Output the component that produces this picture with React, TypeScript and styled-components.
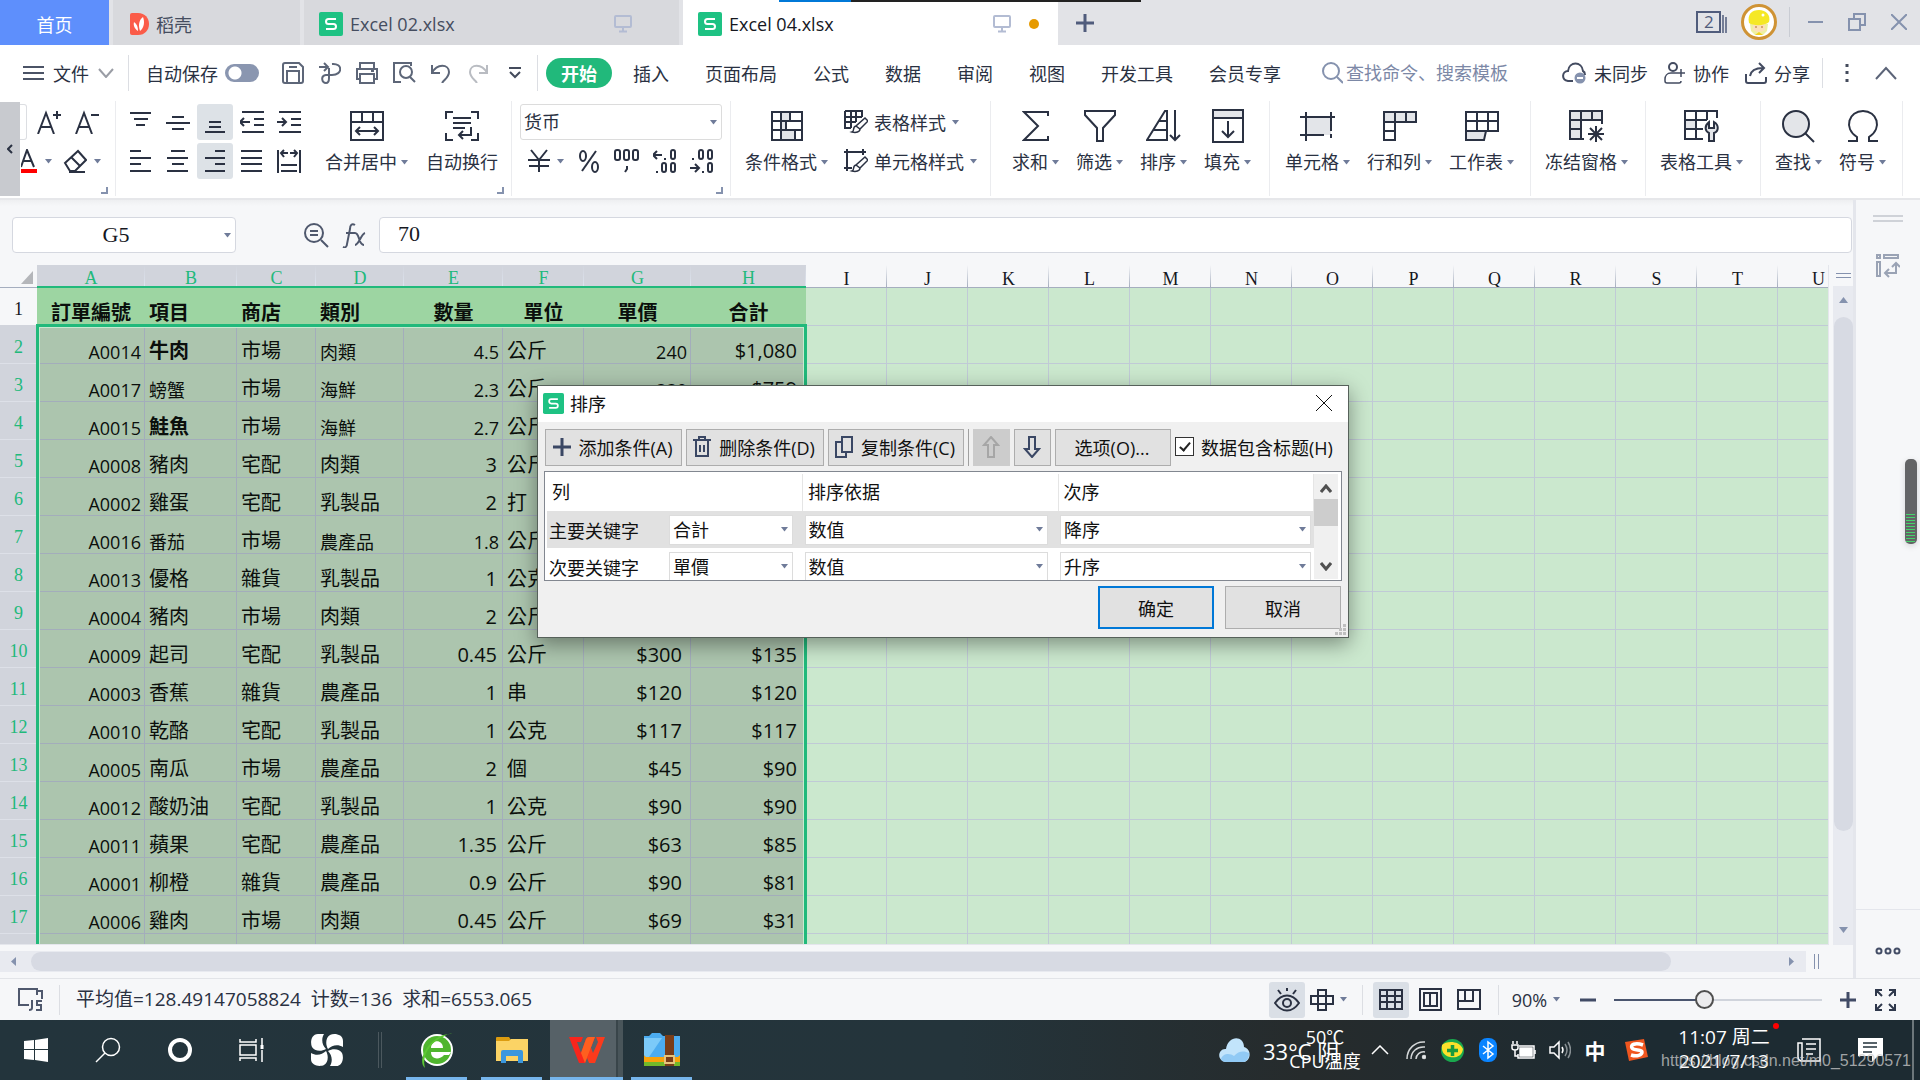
import React from "react";
import styled, { createGlobalStyle, css } from "styled-components";

const ui = `"Open Sans", "Noto Sans CJK SC", sans-serif`;
const sheetFont = `"Open Sans", "Noto Sans CJK TC", sans-serif`;
const serif = `"Liberation Serif", "Noto Sans CJK SC", serif`;
const ink = "#2a3142";
const green = "#21b97b";
const slate = "#8592ae";

const Global = createGlobalStyle`
  *, *::before, *::after { box-sizing: border-box; }
  body { margin: 0; font-family: ${ui}; font-size: 18px; color: ${ink}; }
  button, input, select { font: inherit; color: inherit; }
  button { background: none; border: 0; padding: 0; display: inline-flex; align-items: center; justify-content: center; white-space: nowrap; }
  svg { display: block; flex: none; }
`;

const Page = styled.div`
  display: flex;
  flex-direction: column;
  height: 100vh;
  overflow: hidden;
  position: relative;
  background: #f6f7f9;
`;

type IconProps = { w: number; h: number; c?: string; s?: number; children: React.ReactNode };
const Icon = ({ w, h, c = ink, s = 2, children }: IconProps) => (
  <svg width={w} height={h} viewBox={`0 0 ${w} ${h}`} fill="none" stroke={c} strokeWidth={s} aria-hidden="true">
    {children}
  </svg>
);
const Caret = ({ c = "#6f7b99" }: { c?: string }) => (
  <svg width="7" height="5" viewBox="0 0 7 5" aria-hidden="true"><path d="M0 0h7L3.5 4.5z" fill={c} /></svg>
);

/* ---------- document tabs ---------- */
const TabBar = styled.header`
  display: flex;
  flex: none;
  height: 45px;
  gap: 4px;
  background: #e2e3e7;
`;
const DocTab = styled.button<{ $w: number; $kind?: "home" | "active" }>`
  width: ${(p) => p.$w}px;
  height: 45px;
  padding: 2px 15px 0;
  gap: 7px;
  justify-content: ${(p) => (p.$kind === "home" ? "center" : "flex-start")};
  background: ${(p) => (p.$kind === "home" ? "#5e8ffc" : p.$kind === "active" ? "#fff" : "#d8d9dd")};
  color: ${(p) => (p.$kind === "home" ? "#fff" : p.$kind === "active" ? "#16181f" : "#454d5f")};
`;
const TabName = styled.span`flex: 1; text-align: left;`;
const Dot = styled.span<{ $on?: boolean }>`
  width: 10px;
  height: 10px;
  margin: 0 4px 0 11px;
  border-radius: 50%;
  background: ${(p) => (p.$on ? "#e69a00" : "transparent")};
`;
const NewTab = styled.button`width: 46px; height: 45px;`;
const WindowTools = styled.div`
  display: flex;
  align-items: center;
  margin-left: auto;
  height: 44px;
`;
const WinButton = styled.button<{ $w: number }>`width: ${(p) => p.$w}px; height: 44px;`;
const Rule = styled.span<{ $h: number; $m?: string; $c?: string }>`
  width: 1px;
  flex: none;
  height: ${(p) => p.$h}px;
  margin: ${(p) => p.$m || "0"};
  background: ${(p) => p.$c || "#dcdee3"};
`;
const TopStrip = styled.div`
  position: absolute;
  top: 0;
  left: 779px;
  width: 362px;
  height: 2px;
  background: linear-gradient(90deg, #0078d7 72px, #222 72px);
`;

const SheetLogo = ({ size }: { size: number }) => (
  <svg width={size} height={size} viewBox="0 0 24 24" aria-hidden="true">
    <rect width="24" height="24" rx="2" fill="#1ec283" />
    <path d="M17 7H9.5Q7 7 7 9.500T9.500 12h5Q17 12 17 14.500T14.500 17H7" fill="none" stroke="#fff" strokeWidth="2" />
  </svg>
);
const Monitor = () => (
  <Icon w={18} h={18} c="#b3bcd3"><rect x="1" y="1" width="16" height="11" rx="1" /><path d="M9 12v4M5 16.500h8" /></Icon>
);

const Tabs = () => (
  <TabBar>
    <DocTab $w={109} $kind="home">首页</DocTab>
    <DocTab $w={187}>
      <svg width="21" height="22" viewBox="-2 0 21 22" aria-hidden="true">
        <path d="M0 2Q0 0 2 0h6c7 0 11 5 11 11s-4 11-11 11H2q-2 0-2-2z" fill="#fb5c49" />
        <path d="M8 18C5 16 3 13 4 9c3 2 4 5 4 9M10 18C8 12 9 7 13 4c2 5 1 11-3 14" fill="#fff" />
      </svg>
      稻壳
    </DocTab>
    <DocTab $w={375}><SheetLogo size={24} /><TabName>Excel 02.xlsx</TabName><Monitor /><Dot /></DocTab>
    <DocTab $w={375} $kind="active"><SheetLogo size={24} /><TabName>Excel 04.xlsx</TabName><Monitor /><Dot $on /></DocTab>
    <NewTab aria-label="New tab"><Icon w={18} h={18} c="#505c7c" s={3}><path d="M9 0v18M0 9h18" /></Icon></NewTab>
    <WindowTools>
      <WinButton $w={44} aria-label="Windows">
        <svg width="31" height="22" viewBox="0 0 31 22" fill="none" stroke="#505c7c" strokeWidth="2" aria-hidden="true">
          <rect x="1" y="1" width="23" height="20" /><path d="M27 4v18M30 6v16" strokeWidth="1.500" />
          <text x="8" y="17" fontSize="17" fill="#505c7c" stroke="none">2</text>
        </svg>
      </WinButton>
      <WinButton $w={52} aria-label="Account">
        <svg width="36" height="36" viewBox="0 0 36 36" aria-hidden="true">
          <circle cx="18" cy="18" r="16.500" fill="#fff" stroke="#cf9335" strokeWidth="3" />
          <path d="M9 20h18l-1 7-4 4h-8l-4-4z" fill="#eef0a0" />
          <path d="M12 20h12v6q-6 4-12 0z" fill="#fbe0b8" />
          <path d="M8 19C6 10 11 6 18 6s12 5 10 12c-4 4-16 4-20 1" fill="#f5e826" />
          <circle cx="22" cy="11" r="1.500" fill="#fff" />
          <path d="M14 23h2M20 23h2" stroke="#b26b33" strokeWidth="1" />
          <path d="M14 31l4-3 4 3z" fill="#f2d21c" />
        </svg>
      </WinButton>
      <Rule $h={30} $m="0 4px" $c="#c9ccd3" />
      <WinButton $w={42} aria-label="Minimize"><Icon w={16} h={18} c={slate}><path d="M1 9h15" /></Icon></WinButton>
      <WinButton $w={42} aria-label="Restore"><Icon w={18} h={18} c={slate}><path d="M1 6h11v11H1zM6 6V1h11v11h-5" /></Icon></WinButton>
      <WinButton $w={42} aria-label="Close"><Icon w={16} h={16} c={slate}><path d="M0 0l16 16M16 0L0 16" /></Icon></WinButton>
    </WindowTools>
  </TabBar>
);

/* ---------- menu row ---------- */
const MenuRow = styled.nav`
  display: flex;
  flex: none;
  align-items: center;
  height: 56px;
  padding: 0 22px 0 23px;
  background: #fff;
`;
const FileButton = styled.button`gap: 9px; margin-right: 14px;`;
const AutoSave = styled.label`
  display: flex;
  flex: none;
  align-items: center;
  gap: 7px;
  margin: 0 22px 0 17px;
  white-space: nowrap;
`;
const Toggle = styled.input`
  appearance: none;
  width: 34px;
  height: 18px;
  margin: 0;
  border-radius: 9px;
  background: radial-gradient(circle at 10px 9px, #fff 6px, transparent 7px) #8a96b0;
`;
const QuickTools = styled.div`display: flex; flex: none; gap: 13px; margin-right: 10px;`;
const QuickButton = styled.button`flex: none; width: 24px; height: 24px;`;
const StartTab = styled.button`
  flex: none;
  height: 30px;
  padding: 0 15px;
  margin: 0 3px 0 8px;
  border-radius: 15px;
  background: ${green};
  color: #fff;
  font-weight: 700;
`;
const MenuTab = styled.button`flex: none; padding: 0 18px;`;
const Search = styled.label`
  display: flex;
  flex: 1;
  min-width: 0;
  align-items: center;
  gap: 3px;
  margin-left: 23px;
`;
const SearchInput = styled.input`
  flex: 1;
  width: 100%;
  min-width: 0;
  padding: 0;
  border: 0;
  outline: 0;
  background: none;
  &::placeholder { color: #7c88a6; opacity: 1; }
`;
const Share = styled.div`display: flex; flex: none; gap: 16px; align-items: center;`;
const ShareButton = styled.button`gap: 7px;`;

const g = "#5d6678";
const Menu = () => (
  <MenuRow>
    <FileButton>
      <Icon w={21} h={14} c="#4b5366"><path d="M0 1h21M0 7h21M0 13h21" /></Icon>文件
      <Icon w={16} h={10} c="#9a9da5"><path d="M1 1l7 8 7-8" /></Icon>
    </FileButton>
    <Rule $h={36} />
    <AutoSave>自动保存<Toggle type="checkbox" /></AutoSave>
    <QuickTools>
      <QuickButton aria-label="Save"><Icon w={22} h={22} c={g}><path d="M3 1h14l4 4v14q0 2-2 2H3q-2 0-2-2V3q0-2 2-2zM5 21V9h12v12M7 5h8" /></Icon></QuickButton>
      <QuickButton aria-label="Export"><Icon w={22} h={22} c={g}><path d="M0 5h8M5 1l4 4-4 4M13 2c11-1 11 11 0 11H7c-6 1-4 8 0 8 3 0 3-3 3-5V6" /></Icon></QuickButton>
      <QuickButton aria-label="Print"><Icon w={22} h={22} c={g}><path d="M4 6V1h14v5M4 17H1V7h20v10h-3M4 12h14v9H4zM15 9h3" /></Icon></QuickButton>
      <QuickButton aria-label="Preview"><Icon w={24} h={22} c={g}><path d="M9 20H2V1h17v3M18 15l5 5" /><circle cx="14" cy="10" r="6" /></Icon></QuickButton>
      <QuickButton aria-label="Undo"><Icon w={20} h={20} c={g}><path d="M1 2v8h8M1 10C6 0 18 1 18 9c0 5-4 7-7 11" /></Icon></QuickButton>
      <QuickButton aria-label="Redo"><Icon w={20} h={20} c="#b9bcc2"><path d="M19 2v8h-8M19 10C14 0 2 1 2 9c0 5 4 7 7 11" /></Icon></QuickButton>
      <QuickButton aria-label="More"><Icon w={12} h={12} c="#444b5c"><path d="M0 1h12M1 5l5 5 5-5" /></Icon></QuickButton>
    </QuickTools>
    <Rule $h={36} />
    <StartTab>开始</StartTab>
    {["插入", "页面布局", "公式", "数据", "审阅", "视图", "开发工具", "会员专享"].map((t) => <MenuTab key={t}>{t}</MenuTab>)}
    <Search>
      <Icon w={21} h={22} c={slate}><circle cx="9" cy="9" r="8" /><path d="M15 15l6 6" /></Icon>
      <SearchInput placeholder="查找命令、搜索模板" />
    </Search>
    <Share>
      <ShareButton>
        <Icon w={25} h={22} c="#434b60"><path d="M11 19H6c-7-1-6-10 0-10C7-1 20-1 21 9c2 1 2 2 2 4" /><circle cx="18" cy="16" r="5.500" fill={slate} stroke="none" /><path d="M15 16h6" stroke="#fff" /></Icon>
        未同步
      </ShareButton>
      <ShareButton>
        <Icon w={22} h={22} c="#434b60"><circle cx="9" cy="5" r="4" /><path d="M13 11H7c-4 0-6 3-6 6v2q0 2 2 2h12q2 0 2-2M17 7v8M13 11h8" strokeWidth="1.500" /></Icon>
        协作
      </ShareButton>
      <ShareButton>
        <Icon w={22} h={22} c="#434b60"><path d="M1 12v7q0 2 2 2h16q2 0 2-2v-4M5 14C6 8 11 6 18 6M14 1l5 5-5 5" /></Icon>
        分享
      </ShareButton>
    </Share>
    <Rule $h={30} $m="0 12px" />
    <QuickButton aria-label="Menu"><Icon w={4} h={20} c="#444b5c" s={3}><path d="M2 1v3M2 8v3M2 16v3" /></Icon></QuickButton>
    <Rule $h={1} $m="0 7px" $c="#fff" />
    <QuickButton aria-label="Collapse"><Icon w={22} h={14} c="#5c6478"><path d="M1 13L11 2l10 11" /></Icon></QuickButton>
  </MenuRow>
);

/* ---------- ribbon ---------- */
const Ribbon = styled.section`
  display: flex;
  flex: none;
  height: 99px;
  padding-bottom: 2px;
  background: #fff;
  border-bottom: 2px solid #e6e7ea;
`;
const ScrollStrip = styled.button`width: 20px; background: #c8cacf; margin-top: 1px;`;
const Group = styled.div<{ $pad: string; $gap?: number }>`
  position: relative;
  display: flex;
  gap: ${(p) => p.$gap ?? 17}px;
  padding: ${(p) => p.$pad};
  border-right: 1px solid #ebecef;
`;
const Launcher = styled.span`
  position: absolute;
  right: 7px;
  bottom: 2px;
  width: 7px;
  height: 7px;
  border: solid ${slate};
  border-width: 0 2px 2px 0;
`;
const Rows = styled.div`display: flex; flex-direction: column; gap: 3px; padding-top: 3px;`;
const Line = styled.div<{ $gap?: number }>`display: flex; align-items: center; height: 36px; gap: ${(p) => p.$gap ?? 1}px;`;
const Tool = styled.button<{ $on?: boolean; $w?: number }>`
  width: ${(p) => p.$w ?? 36}px;
  height: 36px;
  gap: 7px;
  border-radius: 3px;
  ${(p) => p.$on && css`background: #dde2e7;`}
`;
const Big = styled.button`
  flex-direction: column;
  justify-content: flex-start;
  gap: 6px;
  padding-top: 7px;
`;
const BigArt = styled.span`display: flex; height: 36px; align-items: center;`;
const BigLabel = styled.span`display: flex; align-items: center; gap: 4px; line-height: 24px;`;
const Wide = styled.button`height: 36px; gap: 6px; justify-content: flex-start;`;
const FieldEdge = styled.span`width: 7px; height: 36px; border: solid #dcdee2; border-width: 1px 1px 1px 0; border-radius: 0 3px 3px 0;`;

const Drop = styled.span<{ $h: number; $line: string }>`
  position: relative;
  display: flex;
  align-items: center;
  flex: 1;
  min-width: 0;
  height: ${(p) => p.$h}px;
  > svg { position: absolute; right: 5px; pointer-events: none; }
  select {
    appearance: none;
    width: 100%;
    height: 100%;
    padding: 0 16px 0 3px;
    border: 1px solid ${(p) => p.$line};
    border-radius: ${(p) => (p.$h > 32 ? 3 : 0)}px;
    background: #fff;
    outline: 0;
  }
`;
const FormatBox = styled.div`width: 202px; display: flex;`;
const Select = ({ value, label, h = 30, line = "#dcdcdc" }: { value: string; label: string; h?: number; line?: string }) => (
  <Drop $h={h} $line={line}>
    <select aria-label={label} defaultValue={value}><option>{value}</option></select>
    <Caret />
  </Drop>
);

const BigTool = ({ label, caret = true, children }: { label: string; caret?: boolean; children: React.ReactNode }) => (
  <Big><BigArt>{children}</BigArt><BigLabel>{label}{caret && <Caret />}</BigLabel></Big>
);
const LineTool = ({ d, on }: { d: string; on?: boolean }) => (
  <Tool $on={on} aria-label="Align"><Icon w={24} h={24}><path d={d} /></Icon></Tool>
);
const shade = "#e3e5e9";

const RibbonBar = () => (
  <Ribbon>
    <ScrollStrip aria-label="Scroll left"><Icon w={6} h={10}><path d="M5 1L1 5l4 4" /></Icon></ScrollStrip>
    <Group $pad="0 12px 0 0">
      <Rows>
        <Line>
          <FieldEdge />
          <Tool $w={42} aria-label="Grow font"><Icon w={24} h={24}><path d="M1 24L9 3l8 21M4 17h10M20 1v8M16 5h8" /></Icon></Tool>
          <Tool $w={32} aria-label="Shrink font"><Icon w={24} h={24}><path d="M1 24L9 3l8 21M4 17h10M16 5h8" /></Icon></Tool>
        </Line>
        <Line $gap={9}>
          <Tool $w={32} aria-label="Font color"><Icon w={17} h={24}><path d="M0 18L6 1l7 17M2 12h9" /><path d="M0 22h16" stroke="#f00" strokeWidth="4" /></Icon><Caret /></Tool>
          <Tool $w={42} aria-label="Clear"><Icon w={24} h={24}><path d="M2 14L15 2l8 9-11 11H7z" /><path d="M8 8l9 9M6 23h16" /></Icon><Caret /></Tool>
        </Line>
      </Rows>
      <Launcher />
    </Group>
    <Group $pad="0 13px 0 7px" $gap={18}>
      <Rows>
        <Line>
          <LineTool d="M1 3h21M5 9h14M7 15h9" />
          <LineTool d="M6 7h12M0 13h24M6 19h12" />
          <LineTool on d="M6 12h12M6 17h12M2 22h20" />
          <LineTool d="M2 2h22M14 9h10M14 15h10M2 22h22M0 12h10M4 8l-4 4 4 4" />
          <LineTool d="M2 2h22M14 9h10M14 15h10M2 22h22M0 12h8M5 8l4 4-4 4" />
        </Line>
        <Line>
          <LineTool d="M1 2h11M1 9h21M1 15h11M1 22h21" />
          <LineTool d="M5 2h14M1 9h21M6 15h12M1 22h21" />
          <LineTool on d="M12 2h10M2 9h20M12 15h10M2 22h20" />
          <LineTool d="M1 2h21M1 9h21M1 15h21M1 22h21" />
          <LineTool d="M1 1v23M23 1v23M4 16h16M4 22h16M4 4h7M13 4h7M7 1L4 4l3 4M17 1l3 3-3 4" />
        </Line>
      </Rows>
      <BigTool label="合并居中"><Icon w={34} h={30}><path d="M1 1h32v28H1zM1 11h32M12 1v10M23 1v10M6 20h22M10 16l-4 4 4 4M24 16l4 4-4 4" /></Icon></BigTool>
      <BigTool label="自动换行" caret={false}><Icon w={34} h={30}><path d="M8 1H1v7M26 1h7v7M8 29H1v-7M26 29h7v-7M8 7h18M8 12h18M8 17h12M26 16v8H14M18 20l-4 4 4 4" /></Icon></BigTool>
      <Launcher />
    </Group>
    <Group $pad="0 8px">
      <Rows>
        <FormatBox><Select label="Number format" value="货币" h={36} /></FormatBox>
        <Line>
          <Tool $w={52} aria-label="Currency"><Icon w={22} h={24}><path d="M3 1l8 10 8-10M0 11h22M1 17h20M11 11v12" /></Icon><Caret /></Tool>
          <Tool $w={32} aria-label="Percent"><Icon w={20} h={24}><path d="M17 2L3 22" /><ellipse cx="4" cy="7" rx="3" ry="5" /><ellipse cx="16" cy="18" rx="3" ry="5" /></Icon></Tool>
          <Tool $w={42} aria-label="Thousands"><Icon w={26} h={24}><rect x="1" y="1" width="5" height="10" rx="2" /><rect x="10" y="1" width="5" height="10" rx="2" /><rect x="19" y="1" width="5" height="10" rx="2" /><path d="M13 17v3l-2 3" /></Icon></Tool>
          <Tool $w={32} aria-label="Add decimal"><Icon w={24} h={24}><path d="M0 6h9M4 2L0 6l4 4M12 9v2M4 22v2" /><rect x="18" y="1" width="4" height="9" rx="2" /><rect x="9" y="14" width="4" height="9" rx="2" /><rect x="18" y="14" width="4" height="9" rx="2" /></Icon></Tool>
          <Tool $w={40} aria-label="Remove decimal"><Icon w={24} h={24}><path d="M0 19h9M5 15l4 4-4 4M13 22v2M3 9v2" /><rect x="9" y="1" width="4" height="9" rx="2" /><rect x="18" y="1" width="4" height="9" rx="2" /><rect x="18" y="14" width="4" height="9" rx="2" /></Icon></Tool>
        </Line>
      </Rows>
      <Launcher />
    </Group>
    <Group $pad="0 13px 0 14px" $gap={16}>
      <BigTool label="条件格式"><Icon w={32} h={30}><path d="M10 1h9v9h-9zM10 10h5v9h-5zM10 19h14v10H10z" fill={shade} /><path d="M1 1h30v28H1zM1 10h30M1 19h30M10 1v28M19 1v9M15 10v9M24 19v10" /></Icon></BigTool>
      <Rows>
        <Wide><Icon w={24} h={24}><path d="M1 1h17v6M1 1v17h6M1 7h17M7 1v17M12 1v11M1 12h11" /><path d="M21 8l3 3-8 8-4-3zM12 16c-4 1-1 5-4 6 4 1 8 0 8-3" fill="#fff" strokeWidth="1.500" /></Icon>表格样式<Caret /></Wide>
        <Wide><Icon w={24} h={24}><path d="M0 3h22M3 0v22M0 19h8M19 0v6" /><path d="M21 8l3 3-8 8-4-3zM12 16c-4 1-1 5-4 6 4 1 8 0 8-3" fill="#fff" strokeWidth="1.500" /></Icon>单元格样式<Caret /></Wide>
      </Rows>
    </Group>
    <Group $pad="0 18px 0 21px">
      <BigTool label="求和"><Icon w={28} h={32}><path d="M26 6V2H2l14 14L2 30h24v-4" /></Icon></BigTool>
      <BigTool label="筛选"><Icon w={34} h={34}><path d="M2 2h30v4L20 19v13h-6V19L2 6z" /></Icon></BigTool>
      <BigTool label="排序"><Icon w={36} h={34}><path d="M1 31L19 2h2v29zM13 12h8M7 21h14M29 1v30M24 26l5 5 5-5" /></Icon></BigTool>
      <BigTool label="填充"><Icon w={32} h={34}><path d="M1 1h30v8H1z" fill={shade} /><path d="M1 1h30v32H1zM1 9h30M16 12v15M10 22l6 6 6-6" /></Icon></BigTool>
    </Group>
    <Group $pad="0 16px 0 15px">
      <BigTool label="单元格"><Icon w={36} h={30}><path d="M6 6h25v18H6z" fill={shade} stroke="none" /><path d="M0 6h35M6 1v29M0 24h24M31 1v19M31 23v4" /></Icon></BigTool>
      <BigTool label="行和列"><Icon w={34} h={30}><path d="M1 1h32v10H1z" fill={shade} /><path d="M1 1v28h11V11M12 1v10M23 1v10M1 20h11" /></Icon></BigTool>
      <BigTool label="工作表"><Icon w={34} h={30}><path d="M1 20h20l-2 9H1z" fill={shade} /><path d="M1 1h32v19H1zM1 10h32M12 1v19M23 1v19" /></Icon></BigTool>
    </Group>
    <Group $pad="0 17px 0 14px">
      <BigTool label="冻结窗格"><Icon w={36} h={32}><path d="M1 1h32v9H12v19H1z" fill={shade} stroke="none" /><path d="M33 14V1H1v28h14M1 10h32M12 1v28M23 1v9M1 19h11" /><path d="M27 16v16M19 24h16M21 18l12 12M33 18L21 30" /></Icon></BigTool>
    </Group>
    <Group $pad="0 17px 0 14px">
      <BigTool label="表格工具"><Icon w={36} h={32}><path d="M1 10h11v9H1z" fill={shade} /><path d="M33 8V1H1v28h18M1 10h22M1 19h18M12 1v28M23 1v9" /><path d="M25 12c-5 4-4 9 0 11v8h5v-8c5-2 5-8 0-11v6h-5z" fill={shade} /></Icon></BigTool>
    </Group>
    <Group $pad="0 16px 0 14px">
      <BigTool label="查找"><Icon w={34} h={34}><circle cx="14" cy="15" r="13" fill={shade} /><path d="M23 24l9 9" /></Icon></BigTool>
      <BigTool label="符号"><Icon w={32} h={34}><path d="M1 32h9v-4C-4 19 2 2 16 2s20 17 6 26v4h9" /></Icon></BigTool>
    </Group>
  </Ribbon>
);

/* ---------- workspace ---------- */
const Workspace = styled.main`display: flex; flex: 1; min-height: 0;`;
const SheetPane = styled.div`display: flex; flex-direction: column; flex: 1; min-width: 0;`;
const SidePanel = styled.aside`
  display: flex;
  flex-direction: column;
  align-items: center;
  width: 67px;
  padding: 15px 0 23px;
  border-left: 3px solid #e4e6ec;
  gap: 32px;
`;
const SideFoot = styled.div`
  margin-top: auto;
  align-self: stretch;
  display: flex;
  justify-content: center;
  padding-top: 37px;
  border-top: 1px solid #e4e6ec;
`;
const FormulaBar = styled.div`
  display: flex;
  flex: none;
  align-items: center;
  height: 65px;
  padding: 5px 1px 0 12px;
  background: linear-gradient(#eeeff1, #f6f7f9 6px);
`;
const Field = styled.input<{ $w?: number; $center?: boolean }>`
  ${(p) => (p.$w ? `width: ${p.$w}px;` : "flex: 1; min-width: 0;")}
  height: 36px;
  padding: ${(p) => (p.$center ? "0 34px 0 18px" : "0 18px 2px")};
  border: 1px solid #d5d8e0;
  border-radius: 4px;
  background: #fff;
  outline: 0;
  font-family: ${serif};
  font-size: 22px;
  color: #16181f;
  text-align: ${(p) => (p.$center ? "center" : "left")};
`;
const NameBox = styled.div`
  position: relative;
  display: flex;
  align-items: center;
  margin-right: 68px;
  > svg { position: absolute; right: 5px; }
`;
const FxTools = styled.div`display: flex; gap: 13px; margin-right: 13px;`;
const SheetRow = styled.div`display: flex; flex: 1; min-height: 0;`;
const GridView = styled.div`
  position: relative;
  flex: 1;
  min-width: 0;
  overflow: hidden;
  background: #cbe8ce;
  border-bottom: 1px solid #e4e6ec;
`;
const Grid = styled.table`
  table-layout: fixed;
  width: 1859px;
  border-collapse: separate;
  border-spacing: 0;
  font-family: ${sheetFont};
  color: #0b0f0c;
  th, td { padding: 0; overflow: hidden; white-space: nowrap; }
`;
const ColHead = styled.th<{ $sel?: boolean }>`
  height: 23px;
  font: 400 18px/16px ${serif};
  vertical-align: bottom;
  color: ${(p) => (p.$sel ? green : "#16181f")};
  background: ${(p) => (p.$sel ? "linear-gradient(#d1d4dc, #dde3ee) right / 1px 100% no-repeat #d1d4dc" : "linear-gradient(#f6f7f9, #a5aebf) right / 1px 100% no-repeat #f6f7f9")};
  border-bottom: ${(p) => (p.$sel ? `2px solid ${green}` : "1px solid #a5aebf")};
`;
const Corner = styled.th`
  background: #f6f7f9;
  border-bottom: 1px solid #a5aebf;
  svg { margin: 2px 0 0 21px; }
`;
const RowHead = styled.th<{ $sel?: boolean }>`
  height: 38px;
  font: 400 18px/26px ${serif};
  vertical-align: bottom;
  color: ${(p) => (p.$sel ? green : "#16181f")};
  background: ${(p) => (p.$sel ? "#d1d4dc" : "#f6f7f9")};
  border-bottom: 1px solid ${(p) => (p.$sel ? "#dde0e8" : "#d1d4dc")};
  && { padding-bottom: 3px; }
`;
type Look = "head" | "sel" | "blank";
const Cell = styled.td<{ $look: Look; $right?: number; $small?: boolean; $bold?: boolean }>`
  height: 38px;
  vertical-align: bottom;
  border: solid ${(p) => (p.$look === "sel" ? "#a3adbb" : p.$look === "head" ? "#9dd5a2" : "#c0cad6")};
  border-width: 0 1px 1px 0;
  background: ${(p) => (p.$look === "sel" ? "#acc5ae" : p.$look === "head" ? "#9dd5a2" : "#cbe8ce")};
  font-size: ${(p) => (p.$small ? 18 : 20)}px;
  line-height: ${(p) => (p.$small ? 22 : 24)}px;
  font-weight: ${(p) => (p.$bold ? 700 : 400)};
  text-align: ${(p) => (p.$right ? "right" : "left")};
  && { padding: 0 ${(p) => p.$right ?? 0}px 0 4px; }
`;
const HeadCell = styled(Cell)<{ $center?: boolean }>`
  text-align: ${(p) => (p.$center ? "center" : "left")};
  && { padding-right: ${(p) => (p.$center ? 3 : 0)}px; }
`;
const Selection = styled.div`
  position: absolute;
  top: 59px;
  bottom: -4px;
  left: 36px;
  width: 771px;
  border: 3px solid ${green};
  box-shadow: inset 0 0 0 1px #c9e9d0;
`;

const widths = [37, 108, 92, 79, 88, 99, 81, 107, 115, ...Array(13).fill(81)];
const letters = "ABCDEFGHIJKLMNOPQRSTU".split("");
const heads = ["訂單編號", "項目", "商店", "類別", "數量", "單位", "單價", "合計"];
// "~" marks the smaller face, "*" the bold one
const data: string[][] = [
  ["~A0014", "*牛肉", "市場", "~肉類", "~4.5", "公斤", "~240", "$1,080"],
  ["~A0017", "~螃蟹", "市場", "~海鮮", "~2.3", "公斤", "~330", "$759"],
  ["~A0015", "*鮭魚", "市場", "~海鮮", "~2.7", "公斤", "", ""],
  ["~A0008", "豬肉", "宅配", "肉類", "3", "公斤", "", ""],
  ["~A0002", "雞蛋", "宅配", "乳製品", "2", "打", "", ""],
  ["~A0016", "~番茄", "市場", "~農產品", "~1.8", "公斤", "", ""],
  ["~A0013", "優格", "雜貨", "乳製品", "1", "公克", "", ""],
  ["~A0004", "豬肉", "市場", "肉類", "2", "公斤", "", ""],
  ["~A0009", "起司", "宅配", "乳製品", "0.45", "公斤", "$300", "$135"],
  ["~A0003", "香蕉", "雜貨", "農產品", "1", "串", "$120", "$120"],
  ["~A0010", "乾酪", "宅配", "乳製品", "1", "公克", "$117", "$117"],
  ["~A0005", "南瓜", "市場", "農產品", "2", "個", "$45", "$90"],
  ["~A0012", "酸奶油", "宅配", "乳製品", "1", "公克", "$90", "$90"],
  ["~A0011", "蘋果", "宅配", "農產品", "1.35", "公斤", "$63", "$85"],
  ["~A0001", "柳橙", "雜貨", "農產品", "0.9", "公斤", "$90", "$81"],
  ["~A0006", "雞肉", "市場", "肉類", "0.45", "公斤", "$69", "$31"],
  ["", "", "", "", "", "", "", ""],
];
const rightPad: Record<number, [number, number]> = { 0: [3, 3], 4: [5, 3], 6: [8, 3], 7: [8, 8] };
const blanks = letters.slice(8);

const Sheet = () => (
  <GridView>
    <Grid>
      <colgroup>{widths.map((w, i) => <col key={i} style={{ width: w }} />)}</colgroup>
      <thead>
        <tr>
          <Corner aria-label="Select all"><svg width="12" height="13" viewBox="0 0 12 13"><path d="M12 0v13H0z" fill="#b4b6ba" /></svg></Corner>
          {letters.map((l, i) => <ColHead key={l} $sel={i < 8}>{l}</ColHead>)}
        </tr>
      </thead>
      <tbody>
        <tr>
          <RowHead>1</RowHead>
          {heads.map((h, i) => <HeadCell key={h} $look="head" $bold $center={i === 0 || i > 3}>{h}</HeadCell>)}
          {blanks.map((b) => <Cell key={b} $look="blank" />)}
        </tr>
        {data.map((row, r) => (
          <tr key={r}>
            <RowHead $sel>{r < 16 ? r + 2 : ""}</RowHead>
            {row.map((v, i) => {
              const small = v.startsWith("~");
              const pads = rightPad[i];
              return (
                <Cell key={i} $look="sel" $small={small} $bold={v.startsWith("*")} $right={pads && pads[small ? 1 : 0]}>
                  {v.replace(/^[~*]/, "")}
                </Cell>
              );
            })}
            {blanks.map((b) => <Cell key={b} $look="blank" />)}
          </tr>
        ))}
      </tbody>
    </Grid>
    <Selection />
  </GridView>
);

const VScroll = styled.div`
  display: flex;
  flex-direction: column;
  align-items: center;
  width: 25px;
  flex: none;
  padding-left: 4px;
  border-left: 1px solid #e4e6ec;
`;
const Splitter = styled.span`
  width: 15px;
  height: 5px;
  margin: 8px 0;
  border: solid ${slate};
  border-width: 1px 0;
  flex: none;
`;
const VTrack = styled.div`
  display: flex;
  flex-direction: column;
  align-items: center;
  justify-content: space-between;
  flex: 1;
  width: 100%;
  padding: 11px 0 12px;
  background: #e8eaf0;
`;
const VThumb = styled.div`width: 19px; height: 514px; margin: 14px 0 auto; border-radius: 10px; background: #d7dae3;`;
const HScroll = styled.div`display: flex; flex: none; height: 33px; padding: 6px 34px 6px 0; gap: 8px;`;
const HTrack = styled.div`display: flex; align-items: center; flex: 1; padding: 1px 12px 1px 11px; background: #e8eaf0;`;
const HThumb = styled.div`width: 92%; height: 19px; margin: 0 auto 0 15px; border-radius: 10px; background: #d7dae3;`;
const HSplit = styled.span`width: 5px; height: 15px; margin-top: 3px; border: solid ${slate}; border-width: 0 1px;`;
const Tri = ({ d, w, h }: { d: string; w: number; h: number }) => (
  <svg width={w} height={h} viewBox={`0 0 ${w} ${h}`} aria-hidden="true"><path d={d} fill={slate} /></svg>
);

/* ---------- status bar ---------- */
const StatusBar = styled.footer`
  display: flex;
  flex: none;
  align-items: center;
  height: 42px;
  padding: 0 24px 0 18px;
  border-top: 1px solid #e2e4e8;
`;
const Stats = styled.output`font-size: 19px; white-space: pre; margin-right: auto; padding-bottom: 3px;`;
const ViewButton = styled.button<{ $on?: boolean; $w?: number }>`
  width: ${(p) => p.$w ?? 36}px;
  height: 36px;
  gap: 6px;
  border-radius: 3px;
  ${(p) => p.$on && css`background: #dadfe6;`}
`;
const Zoom = styled.input`
  appearance: none;
  width: 208px;
  height: 20px;
  margin: 0 18px;
  background: linear-gradient(90deg, #4a556f 43%, #d0d4dc 43%) center / 100% 2px no-repeat;
  &::-webkit-slider-thumb {
    appearance: none;
    width: 19px;
    height: 19px;
    border: 2px solid #4f4f4f;
    border-radius: 50%;
    background: #ececee;
  }
`;

const Status = () => (
  <StatusBar>
    <Icon w={25} h={23} c="#4f586d"><path d="M11 17H1V1h18v6M19 3h5v8" /><path d="M14 12v8q0 2-3 2M24 13h-5v4h4v5h-5" /></Icon>
    <Rule $h={30} $m="0 16px" />
    <Stats>平均值=128.49147058824&nbsp; 计数=136&nbsp; 求和=6553.065</Stats>
    <ViewButton $on aria-label="Eye care"><Icon w={26} h={24}><path d="M1 15c7-10 17-10 24 0-7 10-17 10-24 0zM13 0v3M4 2l3 4M22 2l-3 4" /><circle cx="13" cy="15" r="4" /></Icon></ViewButton>
    <ViewButton $w={46} aria-label="Reading"><Icon w={24} h={22}><path d="M8 1h8v20H8zM1 7h22v8H1z" /></Icon><Caret /></ViewButton>
    <Rule $h={30} $m="0 10px 0 11px" />
    <ViewButton $on aria-label="Normal view"><Icon w={24} h={21}><path d="M1 1h22v19H1zM1 7h22M1 13h22M8 1v19M16 1v19" /></Icon></ViewButton>
    <ViewButton $w={42} aria-label="Page layout"><Icon w={23} h={23}><path d="M1 1h21v21H1zM5 5h13v13H5zM11 5v13" /></Icon></ViewButton>
    <ViewButton $w={36} aria-label="Page breaks"><Icon w={24} h={21}><path d="M1 1h22v19H1zM1 12h15V1M8 1v11" /></Icon></ViewButton>
    <Rule $h={30} $m="0 10px 0 11px" />
    <ViewButton $w={54}>90%<Caret /></ViewButton>
    <Rule $h={1} $m="0 8px" $c="#f6f7f9" />
    <Icon w={16} h={16} c="#414b66" s={3}><path d="M0 8h16" /></Icon>
    <Zoom type="range" aria-label="Zoom" min={0} max={100} defaultValue={43} />
    <Icon w={16} h={16} c="#414b66" s={3}><path d="M0 8h16M8 0v16" /></Icon>
    <Rule $h={1} $m="0 9px" $c="#f6f7f9" />
    <Icon w={21} h={22} c="#2f384c"><path d="M1 7V1h6M1 1l6 6M14 1h6v6M20 1l-6 6M1 15v6h6M1 21l6-6M14 21h6v-6M20 21l-6-6" /></Icon>
  </StatusBar>
);

/* ---------- sort dialog ---------- */
const Dialog = styled.section`
  position: absolute;
  top: 385px;
  left: 537px;
  width: 812px;
  height: 253px;
  display: flex;
  flex-direction: column;
  border: 1px solid #56615a;
  background: #f0f0f0;
  color: #111;
  box-shadow: 0 6px 20px rgba(0, 0, 0, 0.4);
`;
const DialogTitle = styled.header`
  display: flex;
  align-items: center;
  height: 36px;
  padding: 0 16px 2px 5px;
  gap: 6px;
  background: #fff;
  button { margin-left: auto; }
`;
const DialogBar = styled.div`display: flex; align-items: center; padding: 7px 6px 4px 7px; gap: 4px;`;
const FlatButton = styled.button<{ $w: number; $off?: boolean }>`
  width: ${(p) => p.$w}px;
  height: 37px;
  padding: 0 2px 2px 0;
  gap: 8px;
  border: 1px solid ${(p) => (p.$off ? "#ccc" : "#adadad")};
  background: ${(p) => (p.$off ? "#ccc" : "#e1e1e1")};
`;
const HasHeader = styled.label`display: flex; align-items: center; gap: 7px; padding-bottom: 2px; white-space: nowrap;`;
const Check = styled.input`
  appearance: none;
  width: 19px;
  height: 19px;
  margin: 0;
  border: 1px solid #333;
  background: #fff;
  display: grid;
  place-items: center;
  &:checked::after {
    content: "";
    width: 6px;
    height: 11px;
    margin-bottom: 3px;
    border: solid #222;
    border-width: 0 2px 2px 0;
    transform: rotate(40deg);
  }
`;
const KeyBox = styled.div`
  display: flex;
  height: 110px;
  margin: 1px 6px 0;
  padding: 2px 3px 1px 2px;
  overflow: hidden;
  border: 1px solid #828790;
  background: #fff;
`;
const Keys = styled.table`
  width: calc(100% - 24px);
  table-layout: fixed;
  border-collapse: collapse;
  th, td { height: 37px; padding: 0; text-align: left; font-weight: 400; }
  th { padding: 0 0 3px 5px; border-right: 1px solid #e5e5e5; }
`;
const KeyRow = styled.tr<{ $on?: boolean }>`background: ${(p) => (p.$on ? "#e1e1e1" : "#fff")};`;
const KeyCell = styled.div<{ $last?: boolean }>`
  display: flex;
  align-items: center;
  padding: 0 ${(p) => (p.$last ? 3 : 10)}px 0 2px;
  gap: 30px;
  white-space: nowrap;
`;
const KeyScroll = styled.div`
  display: flex;
  flex-direction: column;
  align-items: center;
  width: 24px;
  height: 105px;
  padding: 10px 0 8px;
  background: #f0f0f0;
`;
const KeyThumb = styled.div`width: 24px; height: 27px; margin: 6px 0 auto; background: #cdcdcd;`;
const DialogFoot = styled.footer`display: flex; justify-content: flex-end; gap: 11px; padding: 5px 7px;`;
const Action = styled.button<{ $main?: boolean }>`
  width: 116px;
  height: 43px;
  border: ${(p) => (p.$main ? "2px solid #0078d7" : "1px solid #adadad")};
  background: #e1e1e1;
`;
const Grip = styled.svg`position: absolute; right: 2px; bottom: 2px;`;

const navy = "#3a4764";
const SortDialog = () => (
  <Dialog role="dialog" aria-label="排序">
    <DialogTitle>
      <SheetLogo size={21} />排序
      <button aria-label="Close dialog"><Icon w={16} h={16} c="#111" s={1}><path d="M0 0l16 16M16 0L0 16" /></Icon></button>
    </DialogTitle>
    <DialogBar>
      <FlatButton $w={137}><Icon w={18} h={18} c={navy} s={3}><path d="M9 0v18M0 9h18" /></Icon>添加条件(A)</FlatButton>
      <FlatButton $w={138}><Icon w={18} h={22} c={navy}><path d="M0 4h18M6 4V1h6v3M3 4v16h12V4M7 9v7M11 9v7" /></Icon>删除条件(D)</FlatButton>
      <FlatButton $w={136}><Icon w={18} h={22} c={navy}><path d="M7 1h10v15H7zM7 6H1v15h10v-5" /></Icon>复制条件(C)</FlatButton>
      <Rule $h={37} $c="#a0a0a0" />
      <FlatButton $w={37} $off disabled aria-label="Move up"><Icon w={18} h={22} c="#a6a6a6"><path d="M9 1l7 8h-4v12H6V9H2z" /></Icon></FlatButton>
      <FlatButton $w={37} aria-label="Move down"><Icon w={18} h={22} c={navy}><path d="M9 21l7-8h-4V1H6v12H2z" /></Icon></FlatButton>
      <FlatButton $w={116}>选项(O)...</FlatButton>
      <HasHeader><Check type="checkbox" defaultChecked />数据包含标题(H)</HasHeader>
    </DialogBar>
    <KeyBox>
      <Keys>
        <thead><tr><th>列</th><th>排序依据</th><th>次序</th></tr></thead>
        <tbody>
          <KeyRow $on>
            <td><KeyCell>主要关键字<Select label="主要关键字" value="合計" /></KeyCell></td>
            <td><KeyCell><Select label="排序依据" value="数值" /></KeyCell></td>
            <td><KeyCell $last><Select label="次序" value="降序" /></KeyCell></td>
          </KeyRow>
          <KeyRow>
            <td><KeyCell>次要关键字<Select label="次要关键字" value="單價" /></KeyCell></td>
            <td><KeyCell><Select label="排序依据" value="数值" /></KeyCell></td>
            <td><KeyCell $last><Select label="次序" value="升序" /></KeyCell></td>
          </KeyRow>
        </tbody>
      </Keys>
      <KeyScroll>
        <Icon w={12} h={9} c="#505050" s={3}><path d="M1 8l5-6 5 6" /></Icon>
        <KeyThumb />
        <Icon w={12} h={9} c="#505050" s={3}><path d="M1 1l5 6 5-6" /></Icon>
      </KeyScroll>
    </KeyBox>
    <DialogFoot><Action $main>确定</Action><Action>取消</Action></DialogFoot>
    <Grip width="11" height="11" viewBox="0 0 11 11"><path d="M8 0h3v3H8zM8 4h3v3H8zM8 8h3v3H8zM4 4h3v3H4zM4 8h3v3H4zM0 8h3v3H0z" fill="#bfbfbf" /></Grip>
  </Dialog>
);

/* ---------- desktop task bar ---------- */
const TaskBar = styled.footer`
  position: relative;
  display: flex;
  flex: none;
  align-items: center;
  height: 60px;
  background: linear-gradient(90deg, #23343c, #24343b 50%, #262b2c 68%, #1d2b32 85%);
  color: #fff;
`;
const Task = styled.button<{ $w: number }>`width: ${(p) => p.$w}px; height: 60px;`;
const InputMode = styled(Task)`font-size: 21px; font-weight: 700;`;
const Divider = styled.span`width: 4px; height: 36px; margin: 0 18px 0 12px; border: solid #4b585e; border-width: 0 1px;`;
const Running = styled.div`display: flex; gap: 2px;`;
const RunningApp = styled.button<{ $on?: boolean }>`
  width: 73px;
  height: 60px;
  background: ${(p) => (p.$on ? "linear-gradient(90deg, #566167 66px, #39454a 66px, #39454a 68px, #49555a 68px)" : "none")};
  box-shadow: ${(p) => (p.$on ? "inset 0 -3px #76b5ec" : "none")};
  &::after {
    content: "";
    position: absolute;
    bottom: 0;
    width: 61px;
    height: 3px;
    background: #76b5ec;
  }
`;
const Tray = styled.div`display: flex; align-items: center; margin-left: auto;`;
const Weather = styled.div`
  position: relative;
  display: flex;
  align-items: center;
  gap: 13px;
  width: 143px;
  font-size: 22px;
  white-space: nowrap;
`;
const CpuTemp = styled.div`
  position: absolute;
  left: 70px;
  width: 72px;
  padding-bottom: 3px;
  font-size: 18px;
  line-height: 24px;
  text-align: center;
`;
const Clock = styled.time`width: 124px; font-size: 19px; line-height: 24px; text-align: center; padding-bottom: 3px;`;
const Peek = styled.span`width: 8px; height: 60px; border-left: 2px solid #6d777b; margin-left: 4px;`;
const Watermark = styled.span`
  position: absolute;
  right: 9px;
  bottom: 9px;
  font: 16px/20px "Liberation Sans", sans-serif;
  color: rgba(205, 205, 205, 0.75);
`;
const Alert = styled.span`position: absolute; top: 3px; right: 141px; width: 6px; height: 6px; border-radius: 50%; background: #f00;`;

const Taskbar = () => (
  <TaskBar>
    <Task $w={72} aria-label="Start"><svg width="24" height="24" viewBox="0 0 24 24" fill="#fff"><path d="M0 3l10-1v9H0zM11 2l13-2v11H11zM0 12h10v10L0 21zM11 12h13v12l-13-2z" /></svg></Task>
    <Task $w={72} aria-label="Search"><Icon w={26} h={26} c="#fff" s={1.5}><circle cx="16" cy="10" r="8.500" /><path d="M10 16L1 25" /></Icon></Task>
    <Task $w={72} aria-label="Cortana"><Icon w={26} h={26} c="#fff" s={4}><circle cx="13" cy="13" r="10" /></Icon></Task>
    <Task $w={72} aria-label="Task view"><Icon w={26} h={24} c="#fff" s={1.5}><path d="M1 1v3h16V1M1 7h16v10H1zM1 23v-3h16v3M23 0v7M23 12v12" /><path d="M23 7v4" strokeWidth="3" /></Icon></Task>
    <Task $w={78} aria-label="Browser">
      <svg width="32" height="32" viewBox="0 0 32 32" fill="#fff" aria-hidden="true">
        {[0, 90, 180, 270].map((a) => <path key={a} transform={`rotate(${a} 16 16)`} d="M15 15C10 18 3 17 1 13-1 9 0 0 7 0h6C10 5 11 11 15 15z" />)}
      </svg>
    </Task>
    <Divider />
    <Running>
      <RunningApp aria-label="360 Browser">
        <svg width="34" height="36" viewBox="0 0 34 36" aria-hidden="true">
          <circle cx="17" cy="18" r="16" fill="#fff" /><circle cx="17" cy="18" r="14" fill="#4fb52e" />
          <path d="M11 16h12c0-9-12-9-12 0M31 20H11c0 8 9 8 13 3h5" fill="#fff" />
          <path d="M5 36C-5 27 13 0 32 2c-3-1-6 1-9 3C12 9 1 23 5 36" fill="#5cc832" />
        </svg>
      </RunningApp>
      <RunningApp aria-label="Explorer">
        <svg width="32" height="28" viewBox="0 0 32 28" aria-hidden="true">
          <path d="M0 2q0-1 1-1h12l2 3v6H0z" fill="#dc9c10" /><path d="M0 5h13l2-2h17v22H0z" fill="#fbd365" />
          <path d="M5 16q0-2 2-2h18q2 0 2 2v11h-5v-7H10v7H5z" fill="#3b97dd" />
        </svg>
      </RunningApp>
      <RunningApp $on aria-label="WPS">
        <svg width="36" height="28" viewBox="0 0 36 28" aria-hidden="true">
          <path d="M36 1h-9l2 5-5 11-3-8-4 10 3 8h6z" fill="#fb3a1c" />
          <path d="M0 1h14l-2 5H8l4 11 5-14q1-2 3-2h6L16 27h-6z" fill="#f9251c" />
          <path d="M12 17l5-14q1-2 3-2h6L16 27z" fill="#ff5f1f" />
        </svg>
      </RunningApp>
      <RunningApp aria-label="Archive">
        <svg width="36" height="34" viewBox="0 0 36 34" aria-hidden="true">
          <path d="M0 20h36v13H0z" fill="#72b92a" /><path d="M0 18h36v11H0z" fill="#f8a20c" />
          <path d="M0 3h5l3-3h8l3 3h17v19l-2 2H2l-2-2z" fill="#4cacf0" /><path d="M0 5h18L5 24H2l-2-2z" fill="#7ccaf9" />
          <path d="M21 2h9v31h-9z" fill="#7a3d18" /><path d="M21 23h9v7h-9z" fill="none" stroke="#e6c37b" strokeWidth="2" />
        </svg>
      </RunningApp>
    </Running>
    <Tray>
      <Weather>
        <svg width="31" height="25" viewBox="0 0 31 25" aria-hidden="true"><path d="M7 24C-3 23-1 10 7 11 9-3 25-3 25 9c8 2 7 14 0 15z" fill="#c2e4fb" /><path d="M2 21c3-7 10-5 13-3 5-6 11-5 15-3 0 5-2 8-5 9H7q-4 0-5-3" fill="#91caf5" /></svg>
        33°C 阴
        <CpuTemp>50℃<br />CPU温度</CpuTemp>
      </Weather>
      <Task $w={36} aria-label="Hidden icons"><Icon w={18} h={10} c="#fff" s={1.5}><path d="M1 9l8-8 8 8" /></Icon></Task>
      <Task $w={36} aria-label="Wi-Fi"><Icon w={20} h={20} c="#d5d8d9" s={1.5}><path d="M1 19C1 9 9 1 19 2M5 19C5 12 11 6 19 7M10 19c0-4 4-8 9-7" /><circle cx="18" cy="17" r="1.500" fill="#fff" /></Icon></Task>
      <Task $w={36} aria-label="Guard"><svg width="23" height="23" viewBox="0 0 23 23"><circle cx="11.500" cy="11.500" r="11.500" fill="#1aa84e" /><path d="M1 6c4-4 17-5 21 4-1 8-8 9-13 8C3 17 0 12 1 6" fill="#fce12b" /><path d="M11.500 6v11M6 11.500h11" stroke="#1a9b3e" strokeWidth="3.500" /></svg></Task>
      <Task $w={36} aria-label="Bluetooth"><svg width="18" height="24" viewBox="0 0 18 24"><rect width="18" height="24" rx="8" fill="#0a84ff" /><path d="M4 8l10 8-5 4V4l5 4-10 8" fill="none" stroke="#fff" strokeWidth="1.500" /></svg></Task>
      <Task $w={36} aria-label="Battery"><Icon w={26} h={18} c="#fff" s={1.5}><path d="M8 5h15v12H7v-4" /><path d="M9 7h12v8H9z" fill="#fff" /><path d="M24 9v4M2 0v3M6 0v3M1 4h6v3q0 2-3 2t-3-2zM4 9v6h3" /></Icon></Task>
      <Task $w={36} aria-label="Volume"><Icon w={22} h={20} c="#fff" s={1.5}><path d="M1 7h4l5-5v16l-5-5H1z" /><path d="M13 7q2 3 0 6" /><path d="M16 4q4 6 0 12M19 2q5 8 0 16" stroke="#889094" /></Icon></Task>
      <InputMode $w={34}>中</InputMode>
      <Task $w={50} aria-label="Sogou"><svg width="24" height="24" viewBox="0 0 24 24"><path d="M0 4L19 1l4 18-19 4z" fill="#f0561f" /><path d="M18 7C10 4 5 7 7 10s10 1 10 4-5 5-11 3" fill="none" stroke="#fff" strokeWidth="3.500" /></svg></Task>
      <Clock>11:07 周二<br />2021/7/13</Clock>
      <Task $w={46} aria-label="News"><Icon w={24} h={24} c="#fff" s={1.5}><path d="M5 1h18v22H4q-3-1-3-4V5h4v17M9 6h10M9 11h10M9 16h7" /></Icon></Task>
      <Task $w={76} aria-label="Notifications"><svg width="25" height="24" viewBox="0 0 25 24"><path d="M0 0h25v18h-5l-6 6v-6H0z" fill="#fff" /><path d="M5 5h14M5 9h14M5 14h9" stroke="#22313a" strokeWidth="1.500" /></svg></Task>
      <Peek />
    </Tray>
    <Alert />
    <Watermark>https://blog.csdn.net/m0_51290571</Watermark>
  </TaskBar>
);

const LoadMeter = styled.div`
  position: absolute;
  top: 459px;
  right: 3px;
  width: 12px;
  height: 85px;
  border-radius: 5px;
  box-shadow: 0 2px 6px rgba(0, 0, 0, 0.15);
  background: repeating-linear-gradient(0deg, #45d36b 0 1px, transparent 1px 3px) 1px 54px / 9px 29px no-repeat #636466;
`;

export default function App() {
  return (
    <Page>
      <Global />
      <Tabs />
      <Menu />
      <RibbonBar />
      <Workspace>
        <SheetPane>
          <FormulaBar>
            <NameBox><Field $w={224} $center aria-label="Cell" defaultValue="G5" /><Caret /></NameBox>
            <FxTools>
              <Icon w={25} h={25} c="#4f586d"><circle cx="10" cy="10" r="9" /><path d="M17 17l7 7M6 8h8M6 12h8" /></Icon>
              <Icon w={24} h={25} c="#4f586d"><path d="M13 2c-3-2-5 0-5 4L5 21c0 3-2 4-4 3M4 10h9M13 10c5 0 3 12 9 12M23 10c-4 1-6 12-10 12" /></Icon>
            </FxTools>
            <Field aria-label="Formula" defaultValue="70" />
          </FormulaBar>
          <SheetRow>
            <Sheet />
            <VScroll>
              <Splitter />
              <VTrack><Tri w={9} h={6} d="M0 6l4.500-6L9 6z" /><VThumb /><Tri w={9} h={6} d="M0 0h9L4.500 6z" /></VTrack>
            </VScroll>
          </SheetRow>
          <HScroll>
            <HTrack><Tri w={5} h={9} d="M5 0v9L0 4.500z" /><HThumb /><Tri w={5} h={9} d="M0 0v9l5-4.500z" /></HTrack>
            <HSplit />
          </HScroll>
        </SheetPane>
        <SidePanel>
          <Icon w={30} h={7} c="#cfd2d8"><path d="M0 1h30M0 6h30" /></Icon>
          <Icon w={24} h={24} c="#9aa3b5"><path d="M1 1h3v3H1zM8 1h14v3H8zM1 8h3v14H1zM20 9v10H10M16 13l4-4 4 4M13 15l-4 4 4 4" /></Icon>
          <SideFoot><Icon w={26} h={8} c="#434d66"><circle cx="4" cy="4" r="2.500" /><circle cx="13" cy="4" r="2.500" /><circle cx="22" cy="4" r="2.500" /></Icon></SideFoot>
        </SidePanel>
      </Workspace>
      <Status />
      <Taskbar />
      <TopStrip />
      <LoadMeter />
      <SortDialog />
    </Page>
  );
}
